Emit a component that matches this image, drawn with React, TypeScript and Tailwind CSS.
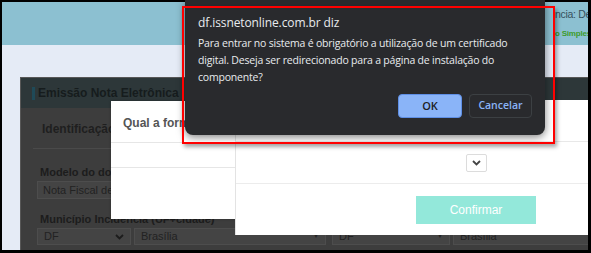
const page = "font-['Liberation_Sans',Arial,sans-serif]";
const chrome = "font-['Open_Sans','Noto_Sans',sans-serif]";

function DarkSelect({ label, width, caret }: { label: string; width: string; caret?: 'chevron' | 'tri' }) {
  return (
    <div className={`${width} h-[17px] shrink-0 flex items-center justify-between px-[6px] bg-[#444444] border border-[#4d4d4d] text-[11px] text-[#222]`}>
      <span>{label}</span>
      {caret === 'chevron' ? (
        <svg width="9" height="6" viewBox="0 0 9 6"><path d="M1 1l3.5 3.5L8 1" stroke="#1c1c1c" strokeWidth="1.8" fill="none" /></svg>
      ) : (
        <span className="text-[6px] text-[#222]">▼</span>
      )}
    </div>
  );
}

function BackgroundPage() {
  return (
    <div className={`h-full flex flex-col bg-[#e5ebf6] ${page}`}>
      <div className="h-[43px] shrink-0 bg-[#8cc0d1] flex justify-end">
        <div className="flex flex-col items-start w-[33px] overflow-hidden whitespace-nowrap pt-[6px]">
          <span className="text-[10.5px] text-[#36505c] leading-[13px] tracking-[-0.3px]">ncia: Dezembro</span>
          <span className="mt-[8px] text-[8px] font-bold text-[#3d9b2c] leading-[10px] tracking-[-0.2px]">o Simples Nacional</span>
        </div>
      </div>
      <div className="flex-1 pl-[18px] pt-[32px]">
        <div className="h-full bg-[#3d3d3d] border-l border-t border-[#575757] flex flex-col">
          <div className="h-[30px] shrink-0 bg-[#2d3739] flex items-center pl-[11px] gap-[3px]">
            <div className="w-[3px] h-[13px] bg-[#1f4a58]" />
            <span className="text-[12px] font-bold text-[#161c1d]">Emissão Nota Eletrônica</span>
          </div>
          <div className="px-[12px] pt-[14px]">
            <div className="pl-[9px] text-[12px] font-bold text-[#1f1f1f] leading-[14px]">Identificação</div>
            <div className="mt-[12px] h-px bg-[#4a4a4a]" />
            <div className="pl-[7px] mt-[17px] text-[11px] font-bold text-[#1c1c1c] leading-[13px]">Modelo do documento</div>
            <div className="ml-[4px] mt-[2px] h-[18px] w-[200px] bg-[#444444] border border-[#4d4d4d] text-[11px] text-[#222] flex items-center px-[5px]">Nota Fiscal de Serviços</div>
            <div className="pl-[7px] mt-[14px] text-[11px] font-bold text-[#1c1c1c] leading-[13px]">Município Incidência (UF+cidade)</div>
            <div className="ml-[4px] mt-[2px] flex gap-[3px]">
              <DarkSelect label="DF" width="w-[94px]" caret="chevron" />
              <DarkSelect label="Brasília" width="w-[192px]" />
              <div className="w-[4px]" />
              <DarkSelect label="DF" width="w-[118px]" />
              <DarkSelect label="Brasília" width="w-[160px]" />
            </div>
          </div>
        </div>
      </div>
    </div>
  );
}

function ChromeDialog() {
  return (
    <div className={`absolute left-[185px] top-0 w-[360px] h-[135px] bg-[#292a2d] rounded-b-[8px] shadow-[0_2px_8px_rgba(0,0,0,0.5)] pt-[15px] pl-[13px] pr-[13px] ${chrome} text-[#e8eaed]`}>
      <div className="text-[12px] leading-[16px] tracking-[-0.1px]">df.issnetonline.com.br diz</div>
      <p className="mt-[4px] text-[10.5px] leading-[17px] tracking-[-0.2px] w-[330px]">
        Para entrar no sistema é obrigatório a utilização de um certificado digital. Deseja ser redirecionado para a página de instalação do componente?
      </p>
      <div className="mt-[8px] flex justify-end gap-[7px]">
        <button className="w-[64px] h-[24px] rounded-[4px] bg-[#8ab4f8] border border-[#5e8fe6] text-[11px] font-semibold text-[#202124]">OK</button>
        <button className="w-[63px] h-[24px] rounded-[4px] border border-[#3c4043] text-[10.5px] font-semibold text-[#8ab4f8]">Cancelar</button>
      </div>
    </div>
  );
}

export default function App() {
  return (
    <div className="relative w-[591px] h-[253px] bg-black pt-[2px] pl-[2px] pr-[3px] pb-[3px] overflow-hidden">
      <div className="relative h-full overflow-hidden">
        <BackgroundPage />
      </div>

      {/* first modal, partly covered */}
      <div className={`absolute left-[111px] top-[101px] w-[126px] h-[118px] bg-white shadow-[0_0_3px_rgba(0,0,0,0.25)] ${page}`}>
        <div className="h-[41px] pl-[12px] pt-[13px] text-[12px] font-bold text-[#555] whitespace-nowrap overflow-hidden">Qual a forma de acesso?</div>
        <div className="h-px bg-[#e6e6e6]" />
        <div className="h-[24px]" />
        <div className="h-px bg-[#e6e6e6]" />
      </div>

      {/* second modal */}
      <div className={`absolute left-[235px] top-[100px] w-[353px] h-[135px] bg-white border-l border-[#e3e3e3] ${page}`}>
        <div className="h-[41px]" />
        <div className="h-px bg-[#e8e8e8]" />
        <div className="h-[41px] flex items-start justify-end pr-[101px] pt-[12px]">
          <div className="w-[21px] h-[18px] border border-[#dcdcdc] rounded-[2px] flex items-center justify-center">
            <svg width="9" height="6" viewBox="0 0 9 6"><path d="M1 1l3.5 3.5L8 1" stroke="#444" strokeWidth="1.8" fill="none" /></svg>
          </div>
        </div>
        <div className="h-px bg-[#ececec]" />
        <div className="flex justify-end pr-[52px] pt-[12px]">
          <div className="w-[120px] h-[28px] bg-[#93e8da] flex items-center justify-center text-[12px] text-white">Confirmar</div>
        </div>
      </div>

      <ChromeDialog />

      {/* red highlight box */}
      <div className="absolute left-[182px] top-[6px] w-[373px] h-[138px] border-2 border-[#ff0000] shadow-[2px_3px_4px_rgba(0,0,0,0.35)]" />
    </div>
  );
}
